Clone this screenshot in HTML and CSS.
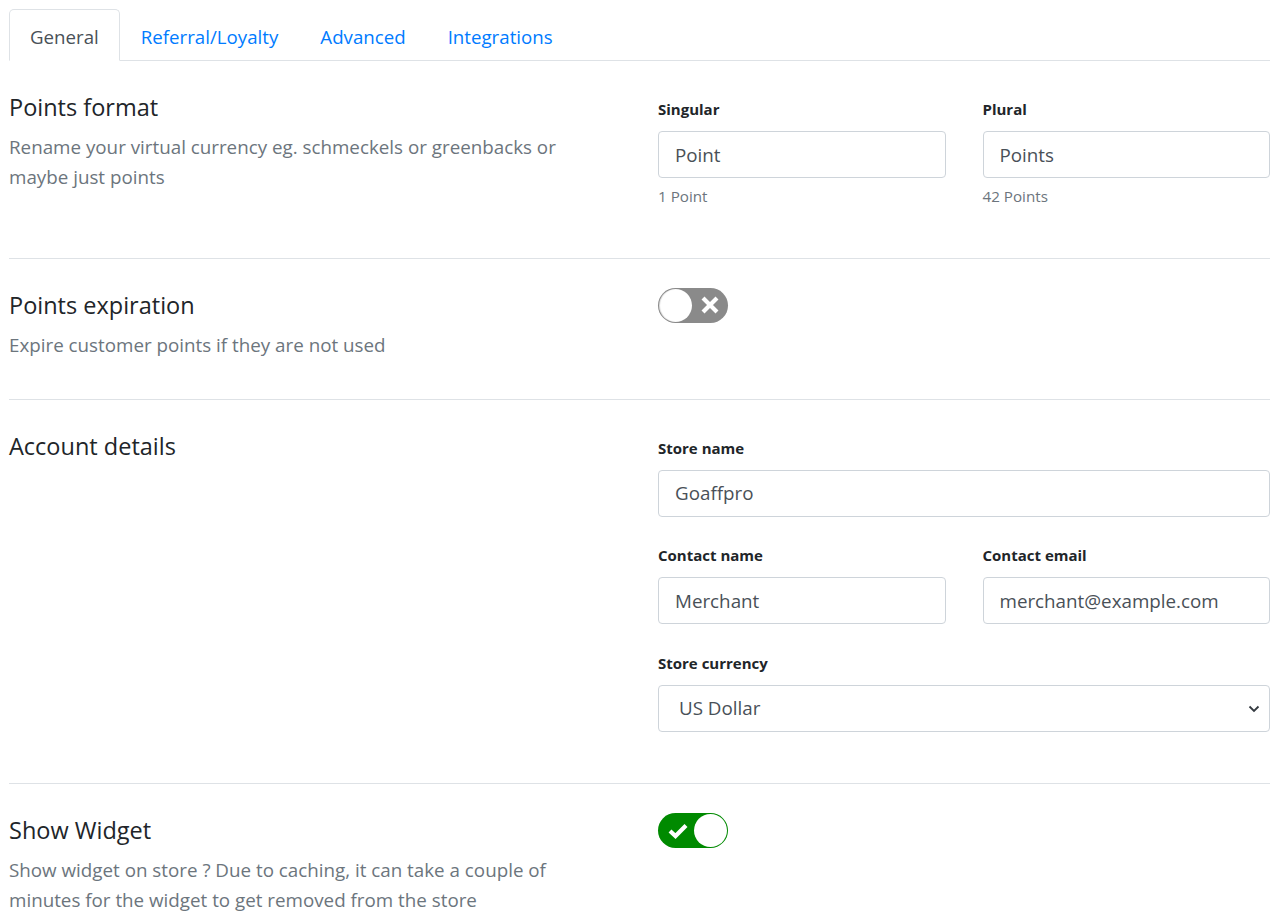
FILE: index.html
```html
<!DOCTYPE html>
<html lang="en">
<head>
<meta charset="utf-8">
<title>Settings</title>
<link rel="stylesheet" href="styles.css">
</head>
<body>
<div class="page">
  <ul class="tabs">
    <li class="tab active">General</li>
    <li class="tab">Referral/Loyalty</li>
    <li class="tab">Advanced</li>
    <li class="tab">Integrations</li>
  </ul>

  <section class="row">
    <div class="info">
      <h4 class="title">Points format</h4>
      <p class="desc">Rename your virtual currency eg. schmeckels or greenbacks or maybe just points</p>
    </div>
    <div class="fields two">
      <div class="group">
        <label class="label">Singular</label>
        <input class="input" type="text" value="Point">
        <small class="help">1 Point</small>
      </div>
      <div class="group">
        <label class="label">Plural</label>
        <input class="input" type="text" value="Points">
        <small class="help">42 Points</small>
      </div>
    </div>
  </section>

  <section class="row">
    <div class="info">
      <h4 class="title">Points expiration</h4>
      <p class="desc">Expire customer points if they are not used</p>
    </div>
    <div class="fields">
      <div class="toggle off">
        <span class="knob"></span>
        <svg class="tgl-icon" width="20" height="20" viewBox="0 0 20 20"><path d="M4.5 4.5 L15.5 15.5 M15.5 4.5 L4.5 15.5" stroke="#fff" stroke-width="4.2" stroke-linecap="square" fill="none"/></svg>
      </div>
    </div>
  </section>

  <section class="row">
    <div class="info">
      <h4 class="title">Account details</h4>
    </div>
    <div class="fields">
      <div class="group">
        <label class="label">Store name</label>
        <input class="input" type="text" value="Goaffpro">
      </div>
      <div class="two">
        <div class="group">
          <label class="label">Contact name</label>
          <input class="input" type="text" value="Merchant">
        </div>
        <div class="group">
          <label class="label">Contact email</label>
          <input class="input" type="text" value="merchant@example.com">
        </div>
      </div>
      <div class="group">
        <label class="label">Store currency</label>
        <div class="select-wrap">
          <select class="input select">
            <option>US Dollar</option>
          </select>
          <svg class="chevron" width="12" height="8" viewBox="0 0 12 8"><path d="M1.5 1.5 L6 6 L10.5 1.5" stroke="#343a40" stroke-width="1.8" fill="none"/></svg>
        </div>
      </div>
    </div>
  </section>

  <section class="row">
    <div class="info">
      <h4 class="title">Show Widget</h4>
      <p class="desc">Show widget on store ? Due to caching, it can take a couple of minutes for the widget to get removed from the store</p>
    </div>
    <div class="fields">
      <div class="toggle on">
        <svg class="tgl-icon" width="22" height="18" viewBox="0 0 22 18"><path d="M3 9 L8.5 14 L19 3.5" stroke="#fff" stroke-width="4.2" fill="none"/></svg>
        <span class="knob"></span>
      </div>
    </div>
  </section>
</div>
</body>
</html>
```

FILE: styles.css
```css
* { box-sizing: border-box; }

body {
  margin: 0;
  background: #fff;
  font-family: "Open Sans", "Noto Sans", sans-serif;
  color: #212529;
}

.page {
  padding: 9px 8px 0 9px;
}

.tabs {
  list-style: none;
  margin: 0;
  padding: 0;
  display: flex;
  border-bottom: 1px solid #dee2e6;
}

.tab {
  padding: 3px 20px 0;
  height: 52px;
  line-height: 48px;
  font-size: 18.7px;
  color: #007bff;
  border: 1px solid transparent;
  border-top-left-radius: 5px;
  border-top-right-radius: 5px;
  margin-bottom: -1px;
}

.tab.active {
  color: #495057;
  background: #fff;
  border-color: #dee2e6 #dee2e6 #fff;
}

.row {
  display: grid;
  grid-template-columns: 1fr 612px;
  column-gap: 40px;
  padding: 32px 0 29px;
  border-top: 1px solid #dee2e6;
}

.tabs + .row {
  border-top: none;
}

.info {
  max-width: 590px;
}

.title {
  margin: 0;
  font-size: 23.5px;
  font-weight: 400;
  line-height: 29px;
  color: #212529;
}

.desc {
  margin: 10px 0 10px;
  font-size: 18.8px;
  line-height: 30px;
  color: #6c757d;
}

.fields {
  min-width: 0;
}

.two {
  display: grid;
  grid-template-columns: 1fr 1fr;
  column-gap: 37px;
}

.group {
  display: flex;
  flex-direction: column;
  margin-bottom: 22.5px;
}

.label {
  font-size: 15px;
  font-weight: 700;
  line-height: 22px;
  margin: 5px 0 11px;
  color: #212529;
}

.input {
  display: block;
  width: 100%;
  height: 47px;
  padding: 0 16px;
  font-family: inherit;
  font-size: 18.8px;
  color: #495057;
  background: #fff;
  border: 1px solid #ced4da;
  border-radius: 4px;
  outline: none;
}

.select-wrap {
  position: relative;
}

.select {
  appearance: none;
  -webkit-appearance: none;
  padding-left: 20px;
}

.chevron {
  position: absolute;
  right: 10px;
  top: 20px;
}

.help {
  margin-top: 8px;
  font-size: 15.2px;
  line-height: 20px;
  color: #6c757d;
}

.toggle {
  width: 70px;
  height: 35px;
  border-radius: 18px;
  display: flex;
  align-items: center;
  margin-top: -3px;
}

.toggle.off {
  background: #8a8a8a;
  justify-content: space-between;
  padding: 1px 8px 1px 1px;
}

.toggle.on {
  background: #008a00;
  justify-content: space-between;
  padding: 1px 1px 1px 9px;
}

.knob {
  width: 33px;
  height: 33px;
  border-radius: 50%;
  background: #fff;
}

.toggle.off .knob {
  box-shadow: inset 1px 0 1px rgba(0, 0, 0, 0.15);
}
```
